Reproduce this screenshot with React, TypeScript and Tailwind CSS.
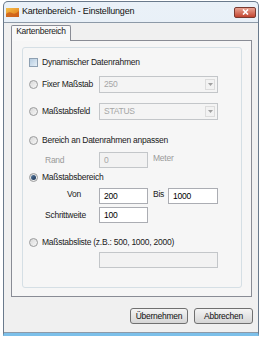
import React from 'react';

const font = "font-['Liberation_Sans',Arial,sans-serif]";

function Radio({ checked = false }: { checked?: boolean }) {
  return (
    <span className="flex h-[9px] w-[9px] shrink-0 items-center justify-center rounded-full border border-[#9a9b9c] bg-gradient-to-br from-[#d8d8d8] to-[#f8f8f8]">
      {checked && <span className="h-[5px] w-[5px] rounded-full bg-gradient-to-br from-[#5a7ca4] to-[#1a3352]" />}
    </span>
  );
}

function Combo({ value }: { value: string }) {
  return (
    <div className="flex h-[17px] w-[119px] items-center justify-between border border-[#c3c6c9] bg-[#f4f4f4] pl-[4px] pr-[2px]">
      <span className="text-[#a6a6a6]">{value}</span>
      <span className="flex h-[11px] w-[10px] items-center justify-center border border-[#dcdcdc] bg-[#f2f2f2]">
        <svg width="5" height="3" viewBox="0 0 5 3">
          <path d="M0 0h5L2.5 3z" fill="#a0a0a0" />
        </svg>
      </span>
    </div>
  );
}

function Field({ value = '', w, disabled = false }: { value?: string; w: string; disabled?: boolean }) {
  return (
    <div
      className={
        disabled
          ? `flex h-[16px] ${w} items-center border border-[#c3c6c9] bg-[#f2f2f2] pl-[4px] text-[#a6a6a6]`
          : `flex h-[16px] ${w} items-center border border-[#abadb3] bg-white pl-[4px] text-black`
      }
    >
      {value}
    </div>
  );
}

export default function App() {
  return (
    <div className={`h-[338px] w-[262px] whitespace-nowrap bg-white pl-[3px] pt-[1px] text-[8.5px] tracking-[-0.25px] text-[#1a1a1a] ${font}`}>
      <div className="flex h-[335px] w-[256px] flex-col rounded-t-[5px] border border-b-[3px] border-[#6a7a8c] border-b-[#7cc0ea] bg-gradient-to-b from-[#eaf1f8] to-[#d8e3ef]">
        {/* title bar */}
        <div className="flex h-[20px] items-center justify-between pl-[2px] pr-[2px]">
          <div className="flex items-center gap-[3px]">
            <svg width="13" height="9" viewBox="0 0 13 9">
              <defs>
                <linearGradient id="ic" x1="0" y1="0" x2="1" y2="1">
                  <stop offset="0" stopColor="#f6c24a" />
                  <stop offset="1" stopColor="#e0761a" />
                </linearGradient>
              </defs>
              <rect x="0" y="0" width="13" height="9" fill="url(#ic)" />
              <path d="M0 6 Q3 3 6 5 T13 3 V9 H0z" fill="#c8561a" opacity="0.7" />
            </svg>
            <span className="text-[9px] tracking-[-0.2px] text-[#111]">Kartenbereich - Einstellungen</span>
          </div>
          <div className="flex h-[11px] w-[22px] items-center justify-center rounded-[2px] border border-[#7a3a30] bg-gradient-to-b from-[#e8a292] to-[#c2432f]">
            <svg width="7" height="6" viewBox="0 0 7 6">
              <path d="M1 0.5 L6 5.5 M6 0.5 L1 5.5" stroke="white" strokeWidth="1.6" />
            </svg>
          </div>
        </div>

        {/* client */}
        <div className="flex flex-1 flex-col border-b border-t border-[#8d9aa8] bg-[#f0f0f0]">
          <div className="ml-[7px] mt-[2px] w-[241px]">
            <div className="flex">
              <div className="relative z-10 -mb-px flex h-[16px] w-[60px] items-end justify-center rounded-t-[2px] border border-b-0 border-[#898c95] bg-[#f8f8f8] pb-[3px]">
                Kartenbereich
              </div>
            </div>
            <div className="h-[257px] border border-[#898c95] bg-[#f6f6f6] pl-[10px] pt-[6px]">
              <div className="flex h-[241px] w-[220px] flex-col rounded-[3px] border border-[#d5dfe5] pl-[5px]">
                <div className="mt-[6px] flex h-[17px] items-center gap-[4px] pl-[1px]">
                  <span className="flex h-[9px] w-[9px] items-center justify-center border border-[#8ea0b2] bg-[#f4f8fb]">
                    <span className="h-[7px] w-[7px] bg-gradient-to-br from-[#b6cce0] to-[#e6eff7]" />
                  </span>
                  <span>Dynamischer Datenrahmen</span>
                </div>

                <div className="mt-[5px] flex h-[17px] items-center">
                  <div className="flex w-[71px] items-center gap-[4px] pl-[1px]">
                    <Radio />
                    <span>Fixer Maßstab</span>
                  </div>
                  <Combo value="250" />
                </div>

                <div className="mt-[10px] flex h-[17px] items-center">
                  <div className="flex w-[71px] items-center gap-[4px] pl-[1px]">
                    <Radio />
                    <span>Maßstabsfeld</span>
                  </div>
                  <Combo value="STATUS" />
                </div>

                <div className="mt-[13px] flex h-[14px] items-center gap-[4px] pl-[1px]">
                  <Radio />
                  <span>Bereich an Datenrahmen anpassen</span>
                </div>

                <div className="mt-[5px] flex h-[16px] items-center">
                  <span className="w-[71px] pl-[17px] text-[#9a9a9a]">Rand</span>
                  <Field value="0" w="w-[49px]" disabled />
                  <span className="-mt-[3px] ml-[5px] text-[#9a9a9a]">Meter</span>
                </div>

                <div className="mt-[3px] flex h-[12px] items-center gap-[4px] pl-[1px]">
                  <Radio checked />
                  <span>Maßstabsbereich</span>
                </div>

                <div className="mt-[5px] flex h-[16px] items-center">
                  <span className="-mt-[3px] w-[71px] pl-[39px]">Von</span>
                  <Field value="200" w="w-[49px]" />
                  <span className="-mt-[3px] ml-[5px] w-[15px]">Bis</span>
                  <Field value="1000" w="w-[50px]" />
                </div>

                <div className="mt-[3px] flex h-[16px] items-center">
                  <span className="w-[71px] pl-[17px]">Schrittweite</span>
                  <Field value="100" w="w-[49px]" />
                </div>

                <div className="mt-[12px] flex h-[14px] items-center gap-[4px] pl-[1px]">
                  <Radio />
                  <span>Maßstabsliste (z.B.: 500, 1000, 2000)</span>
                </div>

                <div className="mt-[3px] flex h-[16px] items-center pl-[71px]">
                  <Field w="w-[119px]" disabled />
                </div>
              </div>
            </div>
          </div>

          <div className="mt-[11px] flex justify-end gap-[6px] pr-[5px]">
            <button className="flex h-[16px] w-[58px] items-center justify-center rounded-[3px] border border-[#707070] bg-gradient-to-b from-[#f4f4f4] to-[#d6d6d6] text-[8.5px] text-[#111]">
              Übernehmen
            </button>
            <button className="flex h-[16px] w-[59px] items-center justify-center rounded-[3px] border border-[#707070] bg-gradient-to-b from-[#f4f4f4] to-[#d6d6d6] text-[8.5px] text-[#111]">
              Abbrechen
            </button>
          </div>
        </div>
      </div>
    </div>
  );
}
